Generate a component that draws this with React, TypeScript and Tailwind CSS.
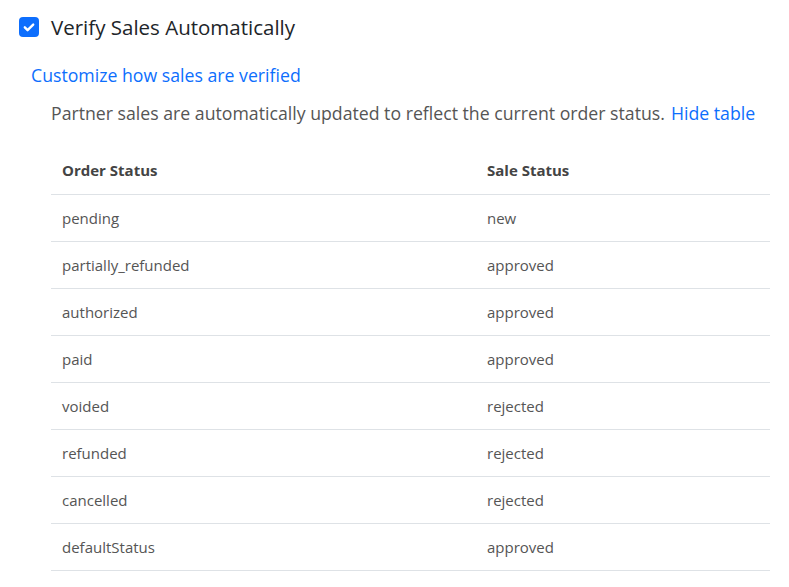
import React from 'react';

const rows = [
    ['pending', 'new'],
    ['partially_refunded', 'approved'],
    ['authorized', 'approved'],
    ['paid', 'approved'],
    ['voided', 'rejected'],
    ['refunded', 'rejected'],
    ['cancelled', 'rejected'],
    ['defaultStatus', 'approved'],
];

const App = () => {
    return (
        <div className="w-[789px] h-[587px] bg-white font-['Open_Sans',sans-serif] overflow-hidden">
            {/* --- TOGGLE HEADER --- */}
            <div className="flex items-center h-[54px] pl-[19px]">
                <span className="w-5 h-5 rounded-[4px] bg-[#0d6efd] flex items-center justify-center">
                    <svg viewBox="0 0 20 20" className="w-[14px] h-[14px]" fill="none" stroke="white" strokeWidth="3.4" strokeLinecap="round" strokeLinejoin="round">
                        <path d="M4 10.5l4 4 8-8" />
                    </svg>
                </span>
                <span className="ml-3 text-[20.5px] text-[#212529] leading-none">Verify Sales Automatically</span>
            </div>

            {/* --- CUSTOMIZE LINK --- */}
            <div className="pl-[31px] h-[42px] flex items-center">
                <a className="text-[17.7px] text-[#0d6efd]">Customize how sales are verified</a>
            </div>

            {/* --- DESCRIPTION + TABLE --- */}
            <div className="pl-[51px] pr-[19px]">
                <p className="h-[35px] flex items-center text-[17.7px] text-[#555]">
                    Partner sales are automatically updated to reflect the current order status.
                    <a className="ml-[6px] text-[#0d6efd]">Hide table</a>
                </p>

                <div className="mt-[16px] text-[15px] text-[#555]">
                    <div className="grid grid-cols-[436px_1fr] h-[48px] items-center border-b border-[#dee2e6] font-bold text-[#444]">
                        <div className="pl-[11px]">Order Status</div>
                        <div>Sale Status</div>
                    </div>
                    {rows.map(([order, sale]) => (
                        <div key={order} className="grid grid-cols-[436px_1fr] h-[47px] items-center border-b border-[#dee2e6]">
                            <div className="pl-[11px]">{order}</div>
                            <div>{sale}</div>
                        </div>
                    ))}
                </div>
            </div>
        </div>
    );
};

export default App;
